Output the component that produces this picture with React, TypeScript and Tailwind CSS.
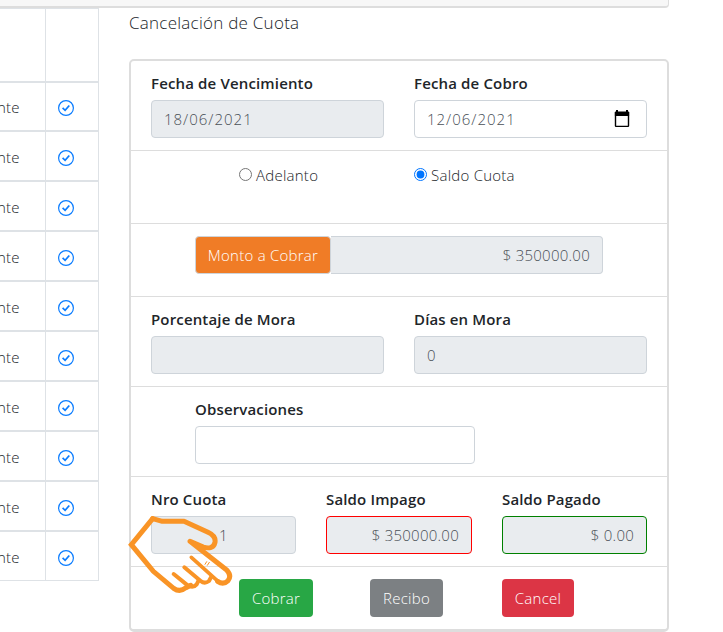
import type { ReactNode } from "react";

const line = "border-b border-[#dddddd]";
const field =
  "flex h-[38px] items-center rounded border border-[#ced4da] bg-[#e9ecef] px-3 text-[#495057]";

function CheckIcon() {
  return (
    <svg className="block h-4 w-4" viewBox="0 0 16 16" fill="none" stroke="#0a7cff">
      <circle cx="8" cy="8" r="7.4" strokeWidth="1.2" />
      <path d="M4.6 7.9 7.1 10.3 11.3 5.5" strokeWidth="1.7" />
    </svg>
  );
}

function StatusTable() {
  return (
    <div className="w-[99px] shrink-0">
      <div className="flex h-[73px] border-t border-[#dee2e6]">
        <div className="w-[45px]" />
        <div className="flex-1 border-x border-[#dee2e6]" />
      </div>
      {Array.from({ length: 10 }, (_, i) => (
        <div
          key={i}
          className="group flex h-[50px] border-t-2 border-[#dee2e6] first-of-type:h-[73px] nth-2:h-[49px] last:h-[51px] last:border-b"
        >
          <div className="w-[45px] pt-[13px] leading-6 group-nth-2:pt-3">
            <span className="-ml-[3px] block whitespace-nowrap">nte</span>
          </div>
          <div className="flex-1 border-x border-[#dee2e6] pt-[18px] pl-3 group-nth-2:pt-[17px]">
            <CheckIcon />
          </div>
        </div>
      ))}
    </div>
  );
}

function Group({ label, className, children }: { label: string; className: string; children: ReactNode }) {
  return (
    <div className={className}>
      <div className="mb-[5px] h-6 leading-6 font-semibold tracking-[0.15px] whitespace-nowrap">{label}</div>
      {children}
    </div>
  );
}

function Hand() {
  return (
    <svg
      className="absolute top-[514px] left-[128px] h-[82px] w-[106px]"
      viewBox="384 162 318 246"
      fill="none"
      stroke="#f99426"
      strokeWidth="15"
      strokeLinejoin="round"
      strokeLinecap="round"
    >
      <path d="M458 176 394 254 460 334 521 385Q540 398 558 383L572 376" strokeLinejoin="miter" />
      <path d="M458 176 487 184H552L624 217Q648 228 645 247C641 265 625 266 610 261L570 244 680 330Q696 347 684 362Q670 376 653 364" />
      <path d="M574 292 655 365" strokeWidth="11" />
      <path d="M553 322 602 363Q614 373 627 363L634 350" strokeWidth="12" />
      <path d="M521 342 563 376Q579 386 590 373L596 361" strokeWidth="12" />
      <path d="M615 313 620 305M622 316 628 307" strokeWidth="3" />
    </svg>
  );
}

export default function App() {
  return (
    <div className="relative h-[632px] w-[723px] overflow-hidden bg-white font-['Open_Sans',sans-serif] text-[15px] font-light tracking-[0.25px] text-[#212529]">
      <div className="h-2 w-[669px] rounded-br border-r border-b-2 border-[#dddddd] bg-[#f7f7f7]" />
      <div className="flex">
        <StatusTable />
        <div className="ml-[30px] w-[540px]">
          <h1 className="h-[51px] pt-[2px] text-[17px] leading-[26px] whitespace-nowrap">Cancelación de Cuota</h1>
          <div className="h-[573px] rounded-[5px] border-2 border-b-[3px] border-[#dddddd]">
            <div className={`flex h-[90px] gap-[30px] px-5 pt-[10px] ${line}`}>
              <Group label="Fecha de Vencimiento" className="w-[233px]">
                <div className={`${field} tracking-[1px]`}>18/06/2021</div>
              </Group>
              <Group label="Fecha de Cobro" className="w-[233px]">
                <div className="flex h-[38px] items-center justify-between rounded border border-[#ced4da] bg-white px-3 text-[#495057]">
                  <span className="tracking-[1px]">12/06/2021</span>
                  <svg className="mr-1 mb-px h-[18px] w-4" viewBox="0 0 16 18">
                    <path d="M3 0V3M13 0V3" stroke="#000" strokeWidth="2" />
                    <path d="M1.5 6V16Q1.5 16.4 2 16.4H14Q14.5 16.4 14.5 16V6" fill="none" stroke="#000" strokeWidth="1.4" />
                    <path d="M.7 2.4Q.7 1.6 2 1.6H14Q15.3 1.6 15.3 2.4V6H.7Z" />
                  </svg>
                </div>
              </Group>
            </div>
            <div className={`flex h-[73px] pt-3 pl-[108px] ${line}`}>
              <label className="flex h-6 w-[175px] items-center">
                <input type="radio" name="tipo" className="mr-1 mb-px h-[13px] w-[13px]" />
                Adelanto
              </label>
              <label className="flex h-6 items-center">
                <input type="radio" name="tipo" defaultChecked className="mr-1 mb-px h-[13px] w-[13px]" />
                Saldo Cuota
              </label>
            </div>
            <div className={`flex h-[73px] px-16 pt-3 ${line}`}>
              <div className="flex h-[38px] w-[136px] items-center justify-center rounded border border-[#ced4da] bg-[#f07c26] whitespace-nowrap text-white">
                Monto a Cobrar
              </div>
              <div className="flex h-[38px] w-[272px] items-center justify-end rounded-r border border-l-0 border-[#ced4da] bg-[#e9ecef] px-3 text-[#495057]">
                $ 350000.00
              </div>
            </div>
            <div className={`flex h-[90px] gap-[30px] px-5 pt-[10px] ${line}`}>
              <Group label="Porcentaje de Mora" className="w-[233px]">
                <div className={field} />
              </Group>
              <Group label="Días en Mora" className="w-[233px]">
                <div className={field}>0</div>
              </Group>
            </div>
            <div className={`flex h-[90px] pt-[10px] pl-16 ${line}`}>
              <Group label="Observaciones" className="w-[280px]">
                <div className="h-[38px] rounded border border-[#ced4da] bg-white" />
              </Group>
            </div>
            <div className={`flex h-[90px] justify-between px-5 pt-[10px] ${line}`}>
              <Group label="Nro Cuota" className="w-[145px]">
                <div className={`${field} justify-center`}>1</div>
              </Group>
              <Group label="Saldo Impago" className="w-[146px]">
                <div className="flex h-[38px] items-center justify-end rounded border border-[#ff0000] bg-[#e9ecef] px-3 text-[#495057]">
                  $ 350000.00
                </div>
              </Group>
              <Group label="Saldo Pagado" className="w-[145px]">
                <div className="flex h-[38px] items-center justify-end rounded border border-[#008000] bg-[#e9ecef] px-3 text-[#495057]">
                  $ 0.00
                </div>
              </Group>
            </div>
            <div className="flex pt-3 pl-[108px] text-white">
              <button className="h-[38px] w-[74px] rounded bg-[#28a745]">Cobrar</button>
              <button className="ml-[57px] h-[38px] w-[73px] rounded bg-[#7c8083]">Recibo</button>
              <button className="ml-[59px] h-[38px] w-[72px] rounded bg-[#dc3545]">Cancel</button>
            </div>
          </div>
        </div>
      </div>
      <Hand />
    </div>
  );
}
